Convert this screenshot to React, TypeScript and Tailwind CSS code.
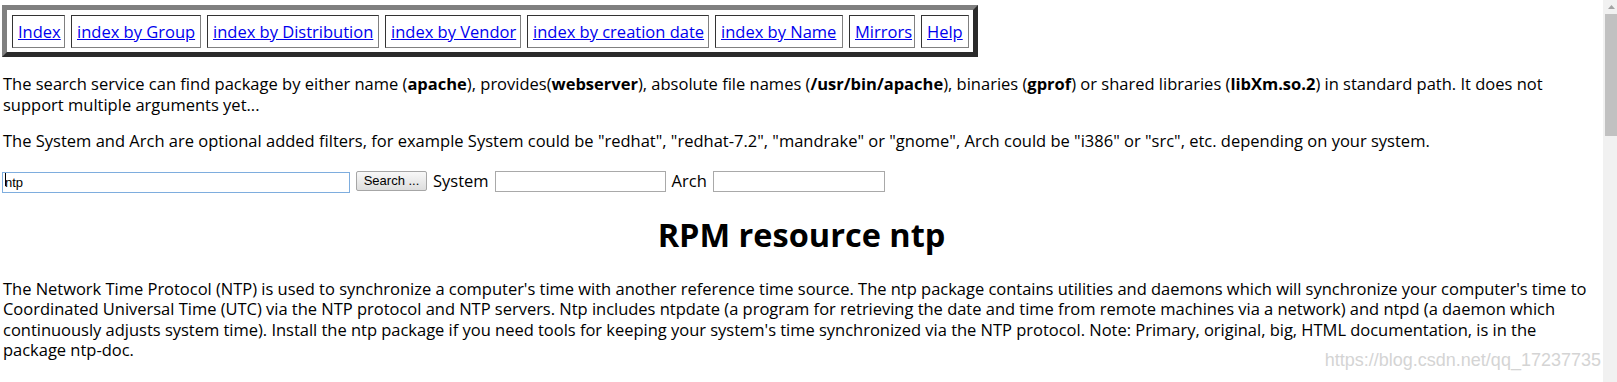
const links = [
  { label: "Index", w: "w-[53px]" },
  { label: "index by Group", w: "w-[130px]" },
  { label: "index by Distribution", w: "w-[172px]" },
  { label: "index by Vendor", w: "w-[136px]" },
  { label: "index by creation date", w: "w-[182px]" },
  { label: "index by Name", w: "w-[128px]" },
  { label: "Mirrors", w: "w-[66px]" },
  { label: "Help", w: "w-[48px]" },
];

function NavTable() {
  return (
    <div className="ml-[2px] mt-[5px] inline-flex gap-[6px] border-[5px] border-t-[#808080] border-l-[#808080] border-b-[#2b2b2b] border-r-[#2b2b2b] bg-white pl-[5px] pr-[4px] pt-[5px] pb-[4px]">
      {links.map((l) => (
        <div
          key={l.label}
          className={`${l.w} h-[33px] border border-t-[#333333] border-l-[#333333] border-b-[#808080] border-r-[#808080] px-[5px] py-[5px] leading-[21px] whitespace-nowrap`}
        >
          <a href="#" className="text-[#0000ee] underline">
            {l.label}
          </a>
        </div>
      ))}
    </div>
  );
}

function SearchForm() {
  return (
    <div className="mt-[19px] ml-[2px] flex h-[21px] items-center gap-[6px]">
      <div className="relative">
        <input
          type="text"
          defaultValue="ntp"
          className="h-[21px] w-[348px] border border-[#7eadde] bg-white px-[2px] font-['Liberation_Sans'] text-[13px] text-black outline-none"
        />
        <span className="absolute left-[3px] top-[4px] h-[13px] w-px bg-black" />
      </div>
      <button
        type="button"
        className="h-[20px] w-[71px] rounded-[2px] border border-[#a6a6a6] bg-gradient-to-b from-[#f8f8f8] to-[#dddddd] font-['Liberation_Sans'] text-[13px] leading-[18px] text-black"
      >
        Search ...
      </button>
      <span className="leading-[20.5px]">System</span>
      <input
        type="text"
        className="h-[21px] w-[171px] border border-[#a9a9a9] bg-white outline-none"
      />
      <span className="leading-[20.5px]">Arch</span>
      <input
        type="text"
        className="h-[21px] w-[172px] border border-[#a9a9a9] bg-white outline-none"
      />
    </div>
  );
}

function Scrollbar() {
  return (
    <div className="flex w-[14px] shrink-0 flex-col bg-[#f1f1f1]">
      <div className="flex h-[14px] items-center justify-center pl-[2px]">
        <svg width="7" height="4" viewBox="0 0 7 4" aria-hidden="true">
          <path d="M3.5 0 L7 4 L0 4 Z" fill="#a3a3a3" />
        </svg>
      </div>
      <div className="ml-[2px] h-[122px] w-[12px] bg-[#c1c1c1]" />
    </div>
  );
}

export default function App() {
  return (
    <div className="relative flex h-[382px] overflow-hidden bg-white font-['Open_Sans',sans-serif] text-[16.5px] text-black">
      <div className="min-w-0 flex-1">
        <NavTable />

        <p className="mt-[17px] pl-[3px] pr-[4px] leading-[20.5px]">
          The search service can find package by either name (<b>apache</b>),
          provides(<b>webserver</b>), absolute file names (
          <b>/usr/bin/apache</b>), binaries (<b>gprof</b>) or shared libraries (
          <b>libXm.so.2</b>) in standard path. It does not
          <br />
          support multiple arguments yet...
        </p>

        <p className="mt-[16px] pl-[3px] leading-[20.5px]">
          The System and Arch are optional added filters, for example System
          could be "redhat", "redhat-7.2", "mandrake" or "gnome", Arch could be
          "i386" or "src", etc. depending on your system.
        </p>

        <SearchForm />

        <h1 className="mt-[26px] text-center text-[32.5px] font-bold leading-[34px]">
          RPM resource ntp
        </h1>

        <p className="mt-[27px] pl-[3px] leading-[20.5px] tracking-[-0.02px]">
          The Network Time Protocol (NTP) is used to synchronize a computer's
          time with another reference time source. The ntp package contains
          utilities and daemons which will synchronize your computer's time to
          <br />
          Coordinated Universal Time (UTC) via the NTP protocol and NTP
          servers. Ntp includes ntpdate (a program for retrieving the date and
          time from remote machines via a network) and ntpd (a daemon which
          <br />
          continuously adjusts system time). Install the ntp package if you
          need tools for keeping your system's time synchronized via the NTP
          protocol. Note: Primary, original, big, HTML documentation, is in the
          <br />
          package ntp-doc.
        </p>
      </div>

      <Scrollbar />

      <span className="pointer-events-none absolute right-[16px] bottom-[8px] font-['Liberation_Sans',sans-serif] text-[18px] text-[#d4d4d4]">
        https://blog.csdn.net/qq_17237735
      </span>
    </div>
  );
}
